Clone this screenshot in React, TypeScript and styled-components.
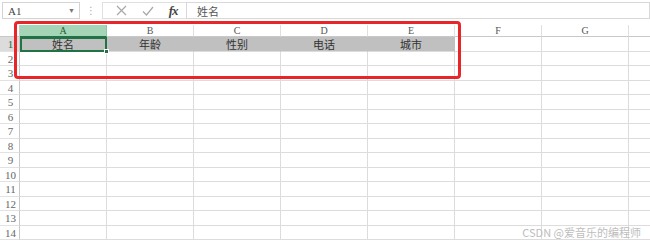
import React from 'react';
import styled, { createGlobalStyle } from 'styled-components';

const GlobalStyle = createGlobalStyle`
  html, body {
    margin: 0;
    padding: 0;
    background: #ffffff;
  }
  body {
    font-family: "Liberation Serif", "Noto Sans CJK SC", serif;
  }
`;

const Page = styled.div`
  position: relative;
  width: 650px;
  height: 243px;
  overflow: hidden;
  background: #fff;
`;

const FormulaBar = styled.div`
  display: flex;
  align-items: center;
  height: 21px;
  padding-left: 2px;
  box-sizing: border-box;
`;

const NameBox = styled.div`
  display: flex;
  align-items: center;
  justify-content: space-between;
  width: 78px;
  height: 17px;
  box-sizing: border-box;
  border: 1px solid #d4d4d4;
  padding: 0 4px 0 5px;
  font-family: "Liberation Serif", serif;
  font-size: 11px;
  color: #444;
`;

const Caret = styled.span`
  font-size: 7px;
  color: #777;
`;

const Dots = styled.div`
  width: 22px;
  text-align: center;
  font-size: 10px;
  color: #aaa;
  font-family: "DejaVu Sans", sans-serif;
`;

const IconGroup = styled.div`
  display: flex;
  align-items: center;
  height: 17px;
  box-sizing: border-box;
  border: 1px solid #e0e0e0;
  border-right: none;
  padding-left: 6px;
  width: 84px;
`;

const IconSlot = styled.div`
  width: 27px;
  display: flex;
  justify-content: center;
  align-items: center;
`;

const Fx = styled.span`
  font-family: "Liberation Serif", serif;
  font-style: italic;
  font-weight: bold;
  font-size: 13px;
  color: #444;
  letter-spacing: -1px;
`;

const FormulaInput = styled.div`
  flex: 1;
  height: 17px;
  box-sizing: border-box;
  border: 1px solid #d8d8d8;
  display: flex;
  align-items: center;
  padding-left: 10px;
  font-family: "Noto Sans CJK SC", sans-serif;
  font-size: 11px;
  color: #555;
`;

const Sheet = styled.div`
  margin-top: 4px;
  display: flex;
  flex-direction: column;
`;

const Row = styled.div<{ $h: number }>`
  display: flex;
  height: ${(p) => p.$h}px;
  flex-shrink: 0;
`;

const RowHead = styled.div<{ $active?: boolean }>`
  width: 20px;
  flex-shrink: 0;
  box-sizing: border-box;
  border-right: 1px solid #c8c8c8;
  border-bottom: 1px solid #e2e2e2;
  background: ${(p) => (p.$active ? '#dcdcdc' : '#ffffff')};
  color: ${(p) => (p.$active ? '#2d6b45' : '#666')};
  font-family: "Liberation Serif", serif;
  font-size: 11px;
  display: flex;
  align-items: center;
  justify-content: center;
  padding-left: 2px;
`;

const ColHead = styled.div<{ $active?: boolean }>`
  width: 87px;
  flex-shrink: 0;
  box-sizing: border-box;
  border-right: 1px solid ${(p) => (p.$active ? '#8fc7a5' : '#e0e0e0')};
  border-bottom: ${(p) => (p.$active ? '1px solid #217346' : '1px solid #c8c8c8')};
  background: ${(p) => (p.$active ? '#a3d5b6' : '#ffffff')};
  color: ${(p) => (p.$active ? '#1e5e38' : '#555')};
  font-family: "Liberation Serif", serif;
  font-size: 10px;
  display: flex;
  align-items: center;
  justify-content: center;
`;

const Corner = styled.div`
  width: 20px;
  flex-shrink: 0;
  box-sizing: border-box;
  border-right: 1px solid #c8c8c8;
  border-bottom: 1px solid #c8c8c8;
`;

const Cell = styled.div<{ $filled?: boolean; $selected?: boolean }>`
  position: relative;
  width: 87px;
  flex-shrink: 0;
  box-sizing: border-box;
  border-right: 1px solid ${(p) => (p.$filled ? '#c0c0c0' : '#dcdcdc')};
  border-bottom: 1px solid #dcdcdc;
  background: ${(p) => (p.$filled ? '#c0c0c0' : '#ffffff')};
  color: #333;
  font-family: "Noto Sans CJK SC", sans-serif;
  font-size: 11px;
  display: flex;
  align-items: center;
  justify-content: center;
  outline: ${(p) => (p.$selected ? '2px solid #217346' : 'none')};
  outline-offset: -2px;
`;

const FillHandle = styled.span`
  position: absolute;
  right: -3px;
  bottom: -3px;
  width: 5px;
  height: 5px;
  background: #217346;
  border: 1px solid #fff;
  box-sizing: border-box;
  z-index: 2;
`;

const Highlight = styled.div`
  position: absolute;
  left: 14px;
  top: 21px;
  width: 447px;
  height: 58px;
  box-sizing: border-box;
  border: 3px solid #e8262a;
  border-radius: 4px;
  pointer-events: none;
  z-index: 3;
`;

const Watermark = styled.div`
  position: absolute;
  right: 9px;
  bottom: 3px;
  font-family: "Noto Sans CJK SC", sans-serif;
  font-size: 11px;
  color: #bdbdbd;
  z-index: 3;
`;

// H is only partly in view, so its letter is not shown
const columns = ['A', 'B', 'C', 'D', 'E', 'F', 'G', ''];
const headers = ['姓名', '年龄', '性别', '电话', '城市'];

function CrossIcon() {
  return (
    <svg width="11" height="11" viewBox="0 0 11 11">
      <path d="M1 1 L10 10 M10 1 L1 10" stroke="#a8a8a8" strokeWidth="1.2" fill="none" />
    </svg>
  );
}

function CheckIcon() {
  return (
    <svg width="12" height="10" viewBox="0 0 12 10">
      <path d="M1 5.5 L4.5 9 L11 1" stroke="#a8a8a8" strokeWidth="1.2" fill="none" />
    </svg>
  );
}

function App() {
  const rows = Array.from({ length: 14 }, (_, i) => i + 1);
  return (
    <Page>
      <GlobalStyle />
      <FormulaBar>
        <NameBox>
          <span>A1</span>
          <Caret>▼</Caret>
        </NameBox>
        <Dots>⋮</Dots>
        <IconGroup>
          <IconSlot>
            <CrossIcon />
          </IconSlot>
          <IconSlot>
            <CheckIcon />
          </IconSlot>
          <IconSlot>
            <Fx>fx</Fx>
          </IconSlot>
        </IconGroup>
        <FormulaInput>姓名</FormulaInput>
      </FormulaBar>
      <Sheet>
        <Row $h={12}>
          <Corner />
          {columns.map((c, ci) => (
            <ColHead key={ci} $active={c === 'A'}>
              {c}
            </ColHead>
          ))}
        </Row>
        {rows.map((r) => (
          <Row key={r} $h={r === 1 ? 15 : r % 2 === 0 ? 14 : 15}>
            <RowHead $active={r === 1}>{r}</RowHead>
            {columns.map((c, ci) => (
              <Cell
                key={ci}
                $filled={r === 1 && ci < headers.length}
                $selected={r === 1 && ci === 0}
              >
                {r === 1 && ci < headers.length ? headers[ci] : null}
                {r === 1 && ci === 0 && <FillHandle />}
              </Cell>
            ))}
          </Row>
        ))}
      </Sheet>
      <Highlight />
      <Watermark>CSDN @爱音乐的编程师</Watermark>
    </Page>
  );
}

export default App;
